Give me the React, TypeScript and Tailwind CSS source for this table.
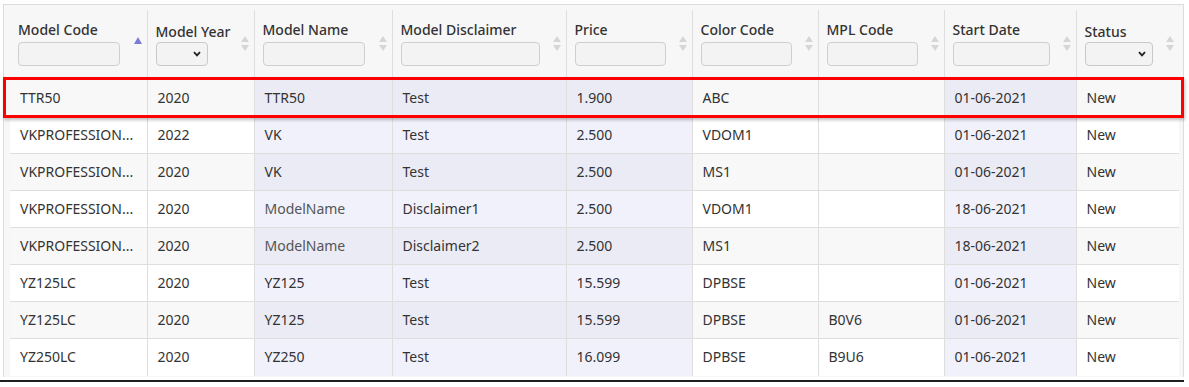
import React from 'react'

type Col = {
  title: string
  width: number
  filter: 'input' | 'select'
  filterWidth: number
  tinted?: boolean
  sort?: 'asc'
}

const columns: Col[] = [
  { title: 'Model Code', width: 137, filter: 'input', filterWidth: 102, sort: 'asc' },
  { title: 'Model Year', width: 107, filter: 'select', filterWidth: 52 },
  { title: 'Model Name', width: 138, filter: 'input', filterWidth: 102, tinted: true },
  { title: 'Model Disclaimer', width: 174, filter: 'input', filterWidth: 139, tinted: true },
  { title: 'Price', width: 126, filter: 'input', filterWidth: 91, tinted: true },
  { title: 'Color Code', width: 126, filter: 'input', filterWidth: 91 },
  { title: 'MPL Code', width: 126, filter: 'input', filterWidth: 91 },
  { title: 'Start Date', width: 132, filter: 'input', filterWidth: 97, tinted: true },
  { title: 'Status', width: 103, filter: 'select', filterWidth: 68 },
]

const rows: string[][] = [
  ['TTR50', '2020', 'TTR50', 'Test', '1.900', 'ABC', '', '01-06-2021', 'New'],
  ['VKPROFESSION...', '2022', 'VK', 'Test', '2.500', 'VDOM1', '', '01-06-2021', 'New'],
  ['VKPROFESSION...', '2020', 'VK', 'Test', '2.500', 'MS1', '', '01-06-2021', 'New'],
  ['VKPROFESSION...', '2020', 'ModelName', 'Disclaimer1', '2.500', 'VDOM1', '', '18-06-2021', 'New'],
  ['VKPROFESSION...', '2020', 'ModelName', 'Disclaimer2', '2.500', 'MS1', '', '18-06-2021', 'New'],
  ['YZ125LC', '2020', 'YZ125', 'Test', '15.599', 'DPBSE', '', '01-06-2021', 'New'],
  ['YZ125LC', '2020', 'YZ125', 'Test', '15.599', 'DPBSE', 'B0V6', '01-06-2021', 'New'],
  ['YZ250LC', '2020', 'YZ250', 'Test', '16.099', 'DPBSE', 'B9U6', '01-06-2021', 'New'],
]

function SortIcon({ active }: { active?: boolean }) {
  if (active) {
    return (
      <svg width="8" height="16" viewBox="0 0 8 16" className="shrink-0 mt-[17px]">
        <polygon points="0,7 4,0 8,7" fill="#7b7bd9" />
      </svg>
    )
  }
  return (
    <svg width="8" height="16" viewBox="0 0 8 16" className="shrink-0 mt-[16px]">
      <polygon points="0,6 4,0 8,6" fill="#d6d6d6" />
      <polygon points="0,9 8,9 4,15" fill="#d6d6d6" />
    </svg>
  )
}

function Filter({ col }: { col: Col }) {
  if (col.filter === 'select') {
    return (
      <div
        className="h-[24px] rounded-[4px] border border-[#c9c9c9] bg-[#f3f3f3] flex items-center justify-end pr-[6px]"
        style={{ width: col.filterWidth }}
      >
        <svg width="8" height="6" viewBox="0 0 8 6">
          <path d="M1 1.2 L4 4.4 L7 1.2" fill="none" stroke="#222" strokeWidth="1.8" />
        </svg>
      </div>
    )
  }
  return (
    <div
      className="h-[24px] rounded-[4px] border border-[#cfcfcf] bg-[#f3f3f3]"
      style={{ width: col.filterWidth }}
    />
  )
}

export default function App() {
  return (
    <div
      className="relative bg-white w-[1189px] h-[387px] text-[#333]"
      style={{ fontFamily: '"Noto Sans", "Open Sans", sans-serif' }}
    >
      <div className="w-[1184px] pt-[4px] pb-[3px] border-b-2 border-[#1f1f1f]">
        <div className="ml-[3px] w-[1181px] border-x border-t border-[#dcdcdc] bg-[#f7f7f7] pl-[6px] pr-[4px] pt-[5px] pb-[1px]">
          <table className="table-fixed border-collapse w-[1169px] text-[14px]">
            <colgroup>
              {columns.map((c) => (
                <col key={c.title} style={{ width: c.width }} />
              ))}
            </colgroup>
            <thead>
              <tr className="bg-[#f7f7f7]">
                {columns.map((c, i) => (
                  <th
                    key={c.title}
                    className={`h-[69px] p-0 align-top text-left font-medium border-b border-[#dedede] ${i > 0 ? 'border-l' : ''}`}
                  >
                    <div className="flex items-start h-[69px] pl-[8px] pr-[5px] pt-[10px]">
                      <div className={`flex-1 flex flex-col ${c.filter === 'select' ? 'pt-[2px]' : ''}`}>
                        <span className="leading-[20px] whitespace-nowrap text-[#333]">{c.title}</span>
                        <div className={c.filter === 'select' ? 'mt-[0px]' : 'mt-[2px]'}>
                          <Filter col={c} />
                        </div>
                      </div>
                      <SortIcon active={c.sort === 'asc'} />
                    </div>
                  </th>
                ))}
              </tr>
            </thead>
            <tbody>
              {rows.map((r, ri) => {
                const odd = ri % 2 === 0
                return (
                  <tr key={ri} className={odd ? 'bg-[#f8f8f8]' : 'bg-white'}>
                    {r.map((v, ci) => {
                      const tinted = columns[ci].tinted
                      const bg = tinted ? (odd ? 'bg-[#ebebf5]' : 'bg-[#f1f1fc]') : ''
                      return (
                        <td
                          key={ci}
                          className={`h-[37px] p-0 pl-[10px] pb-[2px] whitespace-nowrap overflow-hidden border-[#dedede] ${ri > 0 ? 'border-t' : ''} ${ci > 0 ? 'border-l' : ''} ${bg} ${v === 'ModelName' ? 'text-[#555]' : 'text-[#333]'}`}
                        >
                          {v}
                        </td>
                      )
                    })}
                  </tr>
                )
              })}
            </tbody>
          </table>
        </div>
      </div>

      {/* highlight annotation */}
      <div className="absolute left-[3px] top-[77px] w-[1181px] h-[41px] border-[3px] border-[#ff0000] shadow-[1px_2px_3px_rgba(0,0,0,0.25)] pointer-events-none" />
    </div>
  )
}
